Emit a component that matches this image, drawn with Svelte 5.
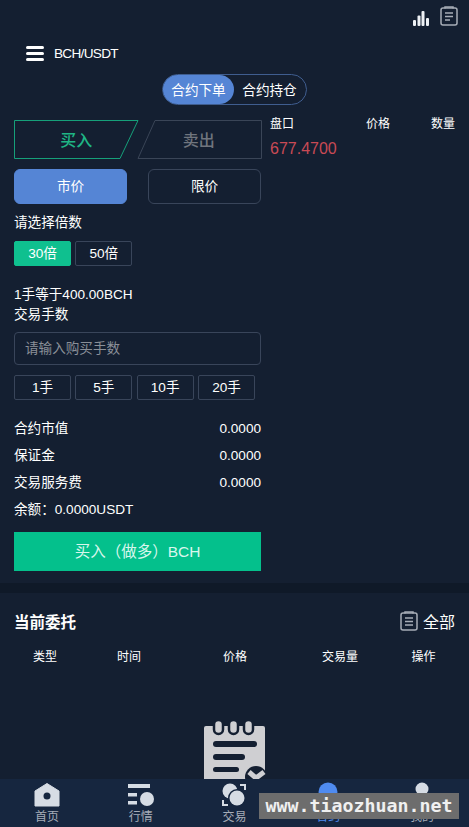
<script>
	const summary = [
		{ label: '合约市值', value: '0.0000' },
		{ label: '保证金', value: '0.0000' },
		{ label: '交易服务费', value: '0.0000' }
	];
	const lots = ['1手', '5手', '10手', '20手'];
	const columns = ['类型', '时间', '价格', '交易量', '操作'];
	const tabs = ['首页', '行情', '交易', '合约', '我的'];
</script>

<div class="page">
	<div class="top-icons">
		<svg width="16" height="15" viewBox="0 0 16 15" fill="#eef1f5">
			<rect x="0" y="9" width="3" height="6" rx="1" />
			<rect x="4.500" y="4.500" width="3" height="10.500" rx="1" />
			<rect x="8.500" y="0" width="3" height="15" rx="1" />
			<rect x="13" y="7" width="3" height="8" rx="1" />
		</svg>
		<svg width="18" height="20" viewBox="0 0 18 20" fill="none" stroke="#a7adb7" stroke-width="1.500">
			<rect x="1" y="2" width="16" height="17" rx="2" />
			<path d="M5 2.500V1h8v1.500M5 7h8M5 10.500h8M5 14h5" />
		</svg>
	</div>

	<div class="header">
		<div class="burger"><i></i><i></i><i></i></div>
		<span>BCH/USDT</span>
	</div>

	<div class="switch-wrap">
		<div class="switch">
			<span class="on">合约下单</span>
			<span>合约持仓</span>
		</div>
	</div>

	<div class="trade">
		<div class="form">
			<div class="sides">
				<button class="side buy">
					<svg width="126" height="39" viewBox="0 0 126 39"><polygon points="0.500,0.500 124,0.500 106,38.500 0.500,38.500" /></svg>
					<span>买入</span>
				</button>
				<button class="side sell">
					<svg width="125" height="39" viewBox="0 0 125 39"><polygon points="18,0.500 124.500,0.500 124.500,38.500 1,38.500" /></svg>
					<span>卖出</span>
				</button>
			</div>

			<div class="order-types">
				<button class="type active">市价</button>
				<button class="type">限价</button>
			</div>

			<div class="label pick">请选择倍数</div>
			<div class="chips">
				<button class="chip active">30倍</button>
				<button class="chip">50倍</button>
			</div>

			<div class="label per-lot">1手等于400.00BCH</div>
			<div class="label lots-label">交易手数</div>
			<input class="lots-input" placeholder="请输入购买手数" />
			<div class="chips quick">
				{#each lots as lot}
					<button class="chip">{lot}</button>
				{/each}
			</div>

			<div class="summary">
				{#each summary as row}
					<div class="row"><span>{row.label}</span><span>{row.value}</span></div>
				{/each}
				<div class="row"><span>余额：0.0000USDT</span></div>
			</div>

			<button class="submit">买入（做多）BCH</button>
		</div>

		<div class="depth">
			<div class="depth-head"><span>盘口</span><span>价格</span><span>数量</span></div>
			<div class="price">677.4700</div>
		</div>
	</div>

	<div class="band"></div>

	<div class="orders">
		<div class="orders-head">
			<h2>当前委托</h2>
			<div class="all">
				<svg width="18" height="20" viewBox="0 0 18 20" fill="none" stroke="#a7adb7" stroke-width="1.500">
					<rect x="1" y="2" width="16" height="17" rx="2" />
					<path d="M5 2.500V1h8v1.500M5 7h8M5 10.500h8M5 14h8" />
				</svg>
				<span>全部</span>
			</div>
		</div>
		<div class="cols">
			{#each columns as col}
				<span>{col}</span>
			{/each}
		</div>
		<div class="empty">
			<svg width="62" height="72" viewBox="0 0 62 72">
				<path d="M2 6h57a2 2 0 0 1 2 2v64H0V8a2 2 0 0 1 2-2z" fill="#cfcfd2" />
				<g fill="#cfcfd2" stroke="#141f31" stroke-width="2.500">
					<rect x="10" y="0" width="9" height="14" rx="4.500" />
					<rect x="25" y="0" width="9" height="14" rx="4.500" />
					<rect x="40" y="0" width="9" height="14" rx="4.500" />
				</g>
				<g fill="#141f31">
					<rect x="9" y="21" width="44" height="6" rx="3" />
					<rect x="9" y="34" width="32" height="6" rx="3" />
					<rect x="9" y="47" width="26" height="5" rx="2.500" />
				</g>
				<circle cx="52" cy="57" r="11" fill="#141f31" />
				<path d="M45 52l7 6 8-6" fill="none" stroke="#cfcfd2" stroke-width="5" />
			</svg>
		</div>
	</div>

	<nav class="tabbar">
		{#each tabs as tab, i}
			<div class="tab" class:current={i === 3}>
				<svg width="26" height="26" viewBox="0 0 26 26">
					{#if i === 0}
						<path d="M13 1.500 25 9v15H1V9z" fill="#d6dce4" stroke="#d6dce4" stroke-linejoin="round" />
						<circle cx="13" cy="14" r="3.500" fill="#16263f" />
					{:else if i === 1}
						<g fill="#d6dce4">
							<rect x="0" y="2" width="22" height="4" />
							<rect x="0" y="11" width="9" height="3.500" />
							<rect x="0" y="19" width="9" height="3.500" />
							<circle cx="19" cy="17" r="7" />
						</g>
					{:else if i === 2}
						<g fill="#d6dce4">
							<circle cx="9" cy="9" r="7.500" />
							<path d="M19 2h6v6h-2V4h-4zM1 18h2v4h4v2H1z" />
						</g>
						<circle cx="16" cy="16" r="9" fill="#16263f" />
						<circle cx="16" cy="16" r="7.500" fill="#d6dce4" />
					{:else if i === 3}
						<circle cx="13" cy="10" r="9.500" fill="#4f8bf0" />
					{:else}
						<circle cx="13" cy="7" r="6.500" fill="#d6dce4" />
					{/if}
				</svg>
				<span>{tab}</span>
			</div>
		{/each}
	</nav>

	<div class="watermark">www.tiaozhuan.net</div>
</div>

<style>
	:global(body) {
		margin: 0;
		background: #141f31;
	}

	.page {
		position: relative;
		height: 827px;
		overflow: hidden;
		background: #141f31;
		color: #fff;
		font-family: "Liberation Sans", "Noto Sans CJK SC", sans-serif;
		font-size: 13.6px;
	}

	button {
		font: inherit;
		color: inherit;
		background: none;
		padding: 0;
		cursor: pointer;
	}

	.top-icons {
		display: flex;
		justify-content: flex-end;
		align-items: flex-end;
		gap: 11px;
		height: 26px;
		padding-right: 11px;
	}

	.header {
		display: flex;
		align-items: center;
		gap: 10px;
		height: 24px;
		margin-top: 15px;
		padding-left: 26px;
		letter-spacing: -0.7px;
	}

	.burger {
		display: flex;
		flex-direction: column;
		gap: 3px;
		width: 18px;
	}

	.burger i {
		height: 3px;
		border-radius: 2px;
		background: #fff;
	}

	.switch-wrap {
		display: flex;
		justify-content: center;
		margin-top: 9px;
	}

	.switch {
		display: flex;
		align-items: center;
		height: 31px;
		box-sizing: border-box;
		border: 1px solid #3f5d8f;
		border-radius: 16px;
		width: 145px;
	}

	.switch span {
		flex: none;
		width: 71px;
		padding-top: 3px;
		line-height: 26px;
		text-align: center;
		border-radius: 15px;
	}

	.switch .on {
		background: #5585d5;
	}

	.trade {
		display: flex;
		gap: 9px;
		margin-top: 15px;
		padding: 0 14px;
	}

	.form {
		flex: none;
		width: 247px;
	}

	.sides {
		display: flex;
		height: 39px;
		justify-content: space-between;
	}

	.side {
		position: relative;
		border: 0;
		width: 125px;
		font-size: 16px;
		font-weight: 500;
		line-height: 41px;
	}

	.side svg {
		position: absolute;
		top: 0;
		left: 0;
	}

	.side polygon {
		fill: none;
		stroke: #3a4557;
	}

	.side span {
		position: relative;
	}

	.buy {
		color: #1fb585;
		margin-right: -2px;
	}

	.buy polygon {
		stroke: #16a07a;
	}

	.sell {
		color: #70757e;
	}

	.order-types {
		display: flex;
		justify-content: space-between;
		margin-top: 10px;
	}

	.type {
		width: 113px;
		height: 35px;
		box-sizing: border-box;
		padding-bottom: 4px;
		border: 1px solid #39455a;
		border-radius: 6px;
	}

	.type.active {
		border-color: #5585d5;
		background: #5585d5;
	}

	.label {
		line-height: 20px;
	}

	.pick {
		margin-top: 9px;
	}

	.chips {
		display: flex;
		gap: 4.33px;
		margin-top: 8px;
	}

	.chip {
		width: 57px;
		height: 25px;
		box-sizing: border-box;
		padding-bottom: 4px;
		border: 1px solid #39455a;
		border-radius: 2px;
	}

	.chip.active {
		border-color: #0fc08f;
		background: #0fc08f;
	}

	.per-lot {
		margin-top: 19px;
	}

	.lots-input {
		display: block;
		width: 100%;
		height: 33px;
		box-sizing: border-box;
		margin-top: 7px;
		padding: 0 10px;
		border: 1px solid #39455a;
		border-radius: 4px;
		background: none;
		color: #fff;
		font: inherit;
		outline: none;
	}

	.lots-input::placeholder {
		color: #8a8f98;
		opacity: 1;
	}

	.quick {
		margin-top: 10px;
	}

	.summary {
		margin-top: 15px;
	}

	.row {
		display: flex;
		justify-content: space-between;
		line-height: 27px;
	}

	.submit {
		display: block;
		width: 100%;
		height: 39px;
		margin-top: 9px;
		padding-bottom: 4px;
		border: 0;
		background: #04c08c;
		color: #d8f6ec;
		font-size: 15.5px;
	}

	.depth {
		flex: 1;
	}

	.depth-head {
		display: grid;
		grid-template-columns: 1fr 65px 65px;
		font-size: 12px;
		line-height: 8px;
		text-align: right;
	}

	.depth-head span:first-child {
		text-align: left;
	}

	.price {
		margin-top: 11px;
		color: #c94a55;
		font-size: 16px;
		line-height: 20px;
	}

	.band {
		height: 10px;
		margin-top: 12px;
		background: #0f1928;
	}

	.orders {
		padding: 0 14px;
	}

	.orders-head {
		display: flex;
		justify-content: space-between;
		align-items: center;
		margin-top: 16px;
		height: 24px;
	}

	.orders-head h2 {
		margin: 0;
		font-size: 15.5px;
		font-weight: 700;
	}

	.all {
		display: flex;
		align-items: center;
		gap: 5px;
		font-size: 16px;
	}

	.cols {
		display: grid;
		grid-template-columns: 62px 106px 106px 104px 1fr;
		margin-top: 16px;
		font-size: 12px;
		line-height: 16px;
		text-align: center;
	}

	.empty {
		display: flex;
		justify-content: center;
		margin-top: 55px;
	}

	.tabbar {
		position: absolute;
		left: 0;
		right: 0;
		bottom: 0;
		display: flex;
		height: 48px;
		background: #16263f;
	}

	.tab {
		flex: 1;
		display: flex;
		flex-direction: column;
		align-items: center;
		gap: 1px;
		color: #a6adb8;
		font-size: 12px;
		line-height: 16px;
		padding-top: 3px;
	}

	.tab svg {
		display: block;
	}

	.tab.current {
		color: #4f8bf0;
	}

	.watermark {
		position: absolute;
		left: 259px;
		top: 793px;
		width: 200px;
		height: 26px;
		background: #6d6d6d;
		color: #f0f0f0;
		font-family: "DejaVu Sans Mono", monospace;
		font-size: 18.3px;
		font-weight: 700;
		line-height: 26px;
		text-align: center;
	}
</style>
